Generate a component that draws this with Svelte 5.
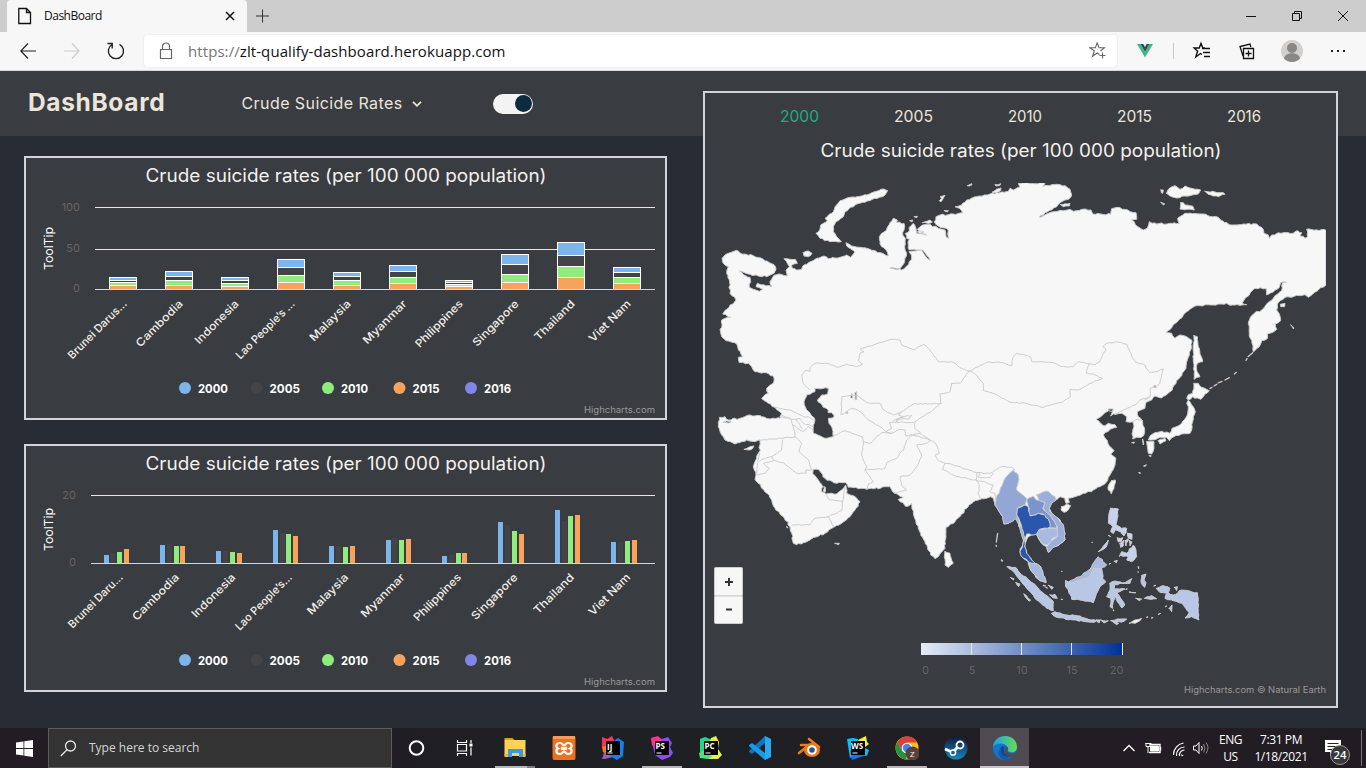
<script>
  const series = [
    { name: '2000', color: '#7cb5ec', len: 30 },
    { name: '2005', color: '#434348', len: 30.5 },
    { name: '2010', color: '#90ed7d', len: 27 },
    { name: '2015', color: '#f7a35c', len: 27 },
    { name: '2016', color: '#8085e9', len: 27 }
  ];

  // Stacked column edges, top to bottom
  const stacked = [
    { label: 'Brunei Darus…', len: 78, edges: [277.5, 280.5, 282.5, 285.5] },
    { label: 'Cambodia', len: 61, edges: [271.5, 276.5, 280.5, 285.5] },
    { label: 'Indonesia', len: 57, edges: [277.5, 280.5, 283.5, 286.5] },
    { label: 'Lao People’s …', len: 78, edges: [259.5, 267.5, 275.5, 282.5] },
    { label: 'Malaysia', len: 53, edges: [272.5, 276.5, 280.5, 285.5] },
    { label: 'Myanmar', len: 57, edges: [265.5, 271.5, 277.5, 283.5] },
    { label: 'Philippines', len: 62, edges: [280.5, 282.5, 284.5, 286.5] },
    { label: 'Singapore', len: 60, edges: [254.5, 264.5, 274.5, 282.5] },
    { label: 'Thailand', len: 52, edges: [242.5, 255.5, 266.5, 277.5] },
    { label: 'Viet Nam', len: 54, edges: [267.5, 272.5, 277.5, 283.5] }
  ];

  const grouped = [
    { label: 'Brunei Daru…', len: 72, x: [104, 110, 117, 124], top: [555, 553, 552, 549] },
    { label: 'Cambodia', len: 61, x: [160, 167, 174, 180], top: [545, 544, 546, 546] },
    { label: 'Indonesia', len: 57, x: [216, 223, 230, 237], top: [551, 551, 552, 553] },
    { label: 'Lao People’s…', len: 75, x: [273, 280, 286, 293], top: [530, 533, 534, 536] },
    { label: 'Malaysia', len: 53, x: [329, 336, 343, 350], top: [546, 546, 547, 546] },
    { label: 'Myanmar', len: 57, x: [386, 392, 399, 406], top: [540, 538, 540, 539] },
    { label: 'Philippines', len: 62, x: [442, 449, 456, 462], top: [556, 555, 553, 553] },
    { label: 'Singapore', len: 60, x: [498, 505, 512, 519], top: [522, 525, 531, 534] },
    { label: 'Thailand', len: 52, x: [555, 562, 568, 575], top: [510, 521, 516, 515] },
    { label: 'Viet Nam', len: 54, x: [611, 618, 625, 632], top: [542, 542, 541, 540] }
  ];

  const years = [['2000', 39], ['2005', 39], ['2010', 34], ['2015', 35], ['2016', 34]];

  // Map geometry: "x,y" lists given in four survey sheets, each with its own origin
  const origin = { A: [0, 0], B: [930, 0], C: [0, 660], D: [900, 660] };
  function pts(spec) {
    const out = [];
    for (const part of spec.split('|')) {
      const [ox, oy] = origin[part.trim()[0]];
      for (const p of part.trim().slice(1).trim().split(/\s+/)) {
        const [x, y] = p.split(',').map(Number);
        out.push([x + ox, y + oy]);
      }
    }
    return out;
  }
  let seed = 11;
  function rnd() {
    seed = (seed * 16807) % 2147483647;
    return seed / 2147483647 - 0.5;
  }
  // Breaks long straight edges into a slightly irregular coastline
  function path(spec, closed = true, rough = 4) {
    const p = pts(spec);
    const n = closed ? p.length : p.length - 1;
    let d = `M${p[0]}`;
    for (let i = 0; i < n; i++) {
      const a = p[i], b = p[(i + 1) % p.length];
      const len = Math.hypot(b[0] - a[0], b[1] - a[1]);
      const k = rough && len < 120 ? Math.floor(len / 7) : 0;
      for (let j = 1; j < k; j++) {
        const t = j / k;
        d += `L${(a[0] + (b[0] - a[0]) * t + rnd() * rough).toFixed(1)},${(a[1] + (b[1] - a[1]) * t + rnd() * rough).toFixed(1)}`;
      }
      d += `L${b}`;
    }
    return closed ? d + 'Z' : d;
  }

  const mainland = path(
    'A 67,265 85,250 110,241 122,250 160,257 190,268 222,284 228,298 222,310 200,320 175,318 150,313 118,303 130,314 150,322 152,335 148,352 160,358 178,364 188,358 168,350 172,340 190,344 215,350 210,335 222,316 238,312 262,318 258,300 268,290 262,280 252,266 270,268 286,268 292,280 275,285 276,294 290,300 305,298 308,288 345,268 372,258 385,266 420,262 440,255 452,262 465,246 440,228 438,218 455,228 480,232 510,238 540,248 565,258 558,240 540,222 538,200 545,190 560,180 570,158 580,145 592,150 590,158 612,160 612,180 608,195 616,205 614,230 620,250 612,280 600,296 570,294 605,300 620,288 634,270 634,255 627,245 640,243 665,240 676,258 690,271 680,256 668,240 640,238 628,240 625,225 628,208 620,205 616,190 628,182 632,168 640,160 648,175 650,190 680,195 665,188 652,178 668,165 690,163 715,175 735,180 738,200 746,206 745,180 715,168 703,155 708,140 720,135 760,132 788,128 778,115 765,110 785,105 800,90 830,80 870,72 905,66 925,64' +
    '|B 0,55 10,60 30,52 25,40 105,40 98,50 125,44 165,47 180,58 185,75 175,88 150,98 125,120 105,128 88,142 110,132 135,125 160,122 180,118 190,124 215,118 243,120 248,132 302,133 305,116 330,113 360,125 378,128 380,148 365,150 380,168 400,180 412,175 418,155 440,162 480,160 508,160 503,145 525,130 570,132 625,142 632,150 665,165 700,162 740,162 760,178 762,190 775,195 778,205 785,195 820,188 850,190 862,182 875,188 870,198 885,205 893,200 890,178 948,181 948,345 925,360 895,382 885,374 860,376 845,382 825,382 810,392 802,402 800,420 808,432 812,452 796,462 800,478 785,488 772,492 772,506 755,512 748,530 730,546 726,520 718,490 715,460 722,440 735,428 755,420 770,402 790,385 815,362 818,338 830,337 812,338 808,352 790,366 770,375 768,355 735,355 720,370 705,385 697,398 710,404 690,406 660,406 650,400 610,405 555,408 530,425 505,452 468,488 485,490 495,505 510,495 530,500 545,510 542,540 532,570 528,595 505,628 480,665 455,684 435,678 425,690 408,697 405,715' +
    '|D 412,65 415,80 428,95 434,120 430,138 410,142 398,147 398,125 402,110 398,95 378,95 380,80 365,70 340,72 332,78 340,60 330,57 315,68 300,82 288,88 300,98 312,108 325,100 345,104 350,112 330,118 310,135 322,152 330,170 342,182 332,192 348,205 345,225 330,255 318,278 300,290 275,305 250,310 225,320 205,325 208,338 198,340 195,325 180,320 168,330 155,340 148,355 155,370 175,385 190,405 195,430 195,450 180,462 160,472 145,487 140,470 125,460 115,445 108,432 95,435 85,440 78,455 75,475 80,490 95,510 105,520 122,530 128,545 132,565 138,578 120,572 105,555 92,540 85,515 65,500 60,485 68,465 70,450 62,425 55,400 50,385 40,388 25,400 12,402 8,380 -5,360 -15,342' +
    '|C 880,325 872,320 860,325 835,330 820,335 800,355 765,395 738,412 738,440 735,475 715,500 705,506 692,495 675,455 655,415 640,370 635,340 618,350 595,328 610,322 585,310 570,290 500,298 445,292 438,278 425,278 400,278 375,265 358,240 340,238 338,250 355,270 368,290 365,305 378,312 410,312 425,300 437,285 440,310 462,318 480,335 465,360 450,380 425,400 395,415 375,430 330,450 290,464 280,460 275,430 270,410 250,380 225,355 215,330 190,298 165,268 168,255 160,230 170,205 178,185 180,150 165,155 140,150 105,162 75,150 65,135 55,110 58,82 75,80 85,90 120,85 150,75 185,80 210,87 240,85 245,70 225,52 205,40 185,25' +
    '|A 205,670 200,655 220,640 220,618 190,608 165,605 145,580 118,578 115,562 128,560 115,540 105,518 78,512 65,500 62,488 65,450 75,445 92,442 68,432 108,390 90,370 88,330 80,310 85,290 70,280',
    true, 5
  );

  const lakes = [
    path('A 345,655 385,655 383,672 365,675 352,690 370,712 385,720 384,728 395,728 403,738 398,744 385,745 387,760 395,770 400,800 375,805 340,790 340,765 345,750 320,720 312,695 320,675 345,665'),
    path('A 465,668 470,665 470,688 466,690', true, 0),
    path('A 455,672 458,672 457,684 451,684', true, 0),
    path('C 70,97 80,93 92,95 88,99', true, 0),
    path('B 432,647 438,647 438,653 433,653', true, 0),
    path('B 296,717 310,717 306,724 296,723', true, 0),
    path('C 440,66 444,66 442,71 439,70', true, 0)
  ];

  const islands = [
    'A 562,62 550,57 500,75 450,82 420,92 410,105 395,130 375,145 382,152 362,165 360,178 348,190 360,205 390,215 424,215 410,200 400,185 400,170 408,155 430,140 435,125 465,105 510,92 555,75',
    'A 310,248 325,243 336,250 325,260 312,258',
    'B 470,70 478,55 495,47 510,58 525,48 545,55 572,60 565,72 525,78 500,84 480,78',
    'B 585,64 640,68 645,73 625,80 595,73',
    'B 512,98 520,98 525,105 548,108 553,120 510,117',
    'B 453,60 460,60 458,70 454,68',
    'B 453,97 464,102 460,105',
    'B 152,104 180,100 178,108 160,110',
    'A 722,80 735,76 730,84 722,96 718,92 724,86',
    'A 803,47 815,41 816,44 808,48',
    'A 886,44 902,41 900,46 888,48',
    'A 890,58 903,54 902,62 885,68 876,67',
    'A 733,122 745,122 742,126',
    'A 630,152 638,150 636,156',
    'A 643,140 652,139 650,143',
    'A 668,158 690,150 697,156 682,160',
    'A 657,182 672,186 660,190 652,186',
    'B 552,497 562,500 565,530 578,575 562,580 560,600 570,620 552,628 552,590 550,545',
    'B 552,640 565,640 575,652 598,662 585,672 572,688 548,680 536,690 530,685 535,674 548,670',
    'B 812,403 825,400 824,410 812,410',
    'B 842,465 852,474 850,477',
    'D 565,30 575,45 586,65 578,95 575,120 570,130 545,132 522,140 508,152 500,142 480,142 455,150 445,150 450,138 465,128 485,124 510,130 516,115 538,106 548,94 562,75 565,50 560,40',
    'D 475,152 495,145 498,152 480,162',
    'D 440,155 462,155 462,175 455,192 445,190 442,170',
    'D 335,272 346,270 342,295 334,312 325,300 326,285',
    'D 185,350 200,342 212,347 205,360 192,367 183,360',
    'C 735,485 750,490 760,520 745,532 735,525 733,500',
    'C 133,178 150,170 162,168 150,180',
    'C 405,460 418,460 416,464',
    'C 372,290 376,292 376,306 370,304',
    'D 396,158 403,156 402,160',
    'D 417,248 421,248 420,251',
    'D 432,228 439,224 436,229',
    'D 448,196 454,198 450,200',
    'D 428,148 431,160 430,165'
  ].map((s) => path(s, true, 4));

  const kurils = ['B 600,655 606,652', 'B 612,648 620,643', 'B 624,639 636,634', 'B 645,630 658,623', 'B 673,612 679,607', 'B 708,571 711,566', 'B 714,560 728,548',
    'C 893,430 889,456', 'C 888,466 889,469', 'C 904,510 907,513', 'C 260,410 263,413'].map((s) => path(s, false, 0));

  const shaded = [
    { c: '#93a7d6', d: ['D -15,345 -12,325 0,300 15,265 40,240 55,255 57,270 50,300 62,310 80,325 75,345 55,352 50,375 58,400 70,425 75,445 72,462 62,425 50,385 25,400 12,402 8,380 -5,360'] },
    { c: '#7b94cd', d: ['D 80,330 100,318 110,330 135,338 128,355 150,375 170,405 168,415 150,415 148,395 130,372 115,370 90,378 85,350'] },
    { c: '#9bafdc', d: ['D 110,315 140,303 165,320 168,330 155,340 148,355 155,370 175,385 190,405 195,430 195,450 180,462 160,472 145,487 140,470 150,455 172,440 172,410 150,375 130,355 135,338 118,332'] },
    { c: '#a9bae0', d: ['D 110,432 118,418 150,415 172,415 172,440 155,448 150,458 140,465 125,460', 'D 85,515 105,520 122,530 128,545 138,578 120,572 105,555 92,540'] },
    { c: '#2a56ac', d: ['D 52,355 75,345 85,350 90,378 115,370 135,375 148,395 150,412 118,418 110,432 95,435 80,432 76,445 74,470 80,490 95,510 105,520 90,518 65,500 60,485 68,465 75,445 70,425 60,395 50,375'] },
    { c: '#b9c7e6', d: [
      'D 22,530 45,532 70,558 100,580 125,605 160,635 160,662 140,655 110,630 85,600 60,570 45,550',
      'D 197,572 215,578 240,570 270,560 280,535 305,535 308,565 318,575 300,590 285,625 280,638 240,630 215,628 205,600 197,590',
      'D 155,670 165,665 200,675 240,678 265,688 290,692 275,697 220,690 170,682',
      'D 330,580 345,573 375,578 396,566 390,580 345,583 342,597 375,597 350,608 362,625 374,645 366,654 352,635 345,615 338,655 330,650 332,625 320,620 330,600',
      'D 470,595 490,587 510,595 505,608 520,615 545,600 592,608 597,690 575,680 555,684 568,668 545,640 520,632 495,625 500,610 480,607',
      'D 146,586 160,592 155,598', 'D 150,615 165,613 172,625 160,624', 'D 32,563 42,566 40,570', 'D 48,578 60,582 56,590', 'D 72,612 92,630 88,634',
      'D 290,690 300,690 298,698 292,696', 'D 302,690 325,692 312,699', 'D 333,692 352,687 380,687 372,694 340,696', 'D 342,698 356,700 350,704',
      'D 426,556 438,552 432,570 438,578 434,592 424,580', 'D 434,625 455,617 470,626 445,627', 'D 408,625 425,627 418,632', 'D 388,606 408,608', 'D 508,655 516,645 515,665', 'D 524,592 532,590 530,602', 'D 475,673 482,670'
    ] },
    { c: '#a9bae0', d: ['D 205,577 240,560 270,538 283,515 295,500 320,525 302,537 280,535 270,560 240,570 215,578'] },
    { c: '#c7d3ed', d: [
      'D 332,355 355,357 352,385 348,405 365,415 380,415 378,430 360,425 345,420 340,430 332,425 338,410 325,400 326,380',
      'D 380,490 400,465 408,480 410,500 395,515 380,510 385,500 362,496 358,500 365,485',
      'D 295,485 310,468 322,455 325,450 320,468 310,478', 'D 352,444 368,443 364,455 354,455', 'D 360,460 372,450 370,468 362,472', 'D 376,452 385,446 378,468',
      'D 383,430 396,432 396,448 385,444', 'D 388,452 396,456 390,468', 'D 335,418 344,423 340,430', 'D 365,430 375,432 372,438', 'D 343,514 352,511 349,518', 'D 328,522 333,520', 'D 325,436 332,440'
    ] },
    { c: '#f7f7f7', d: ['D 388,700 405,690 425,685 420,692 405,700'] }
  ].map((g) => ({ c: g.c, d: g.d.map((s) => path(s, true, 4)).join('') }));

  const dots = 'D 185,544 186,544|D 184,628 187,628|D 415,530 416,535|D 414,546 415,546|D 455,684 458,683|D 440,682 443,681|D 130,586 136,588|D 138,592 142,594|D 276,457 277,457|D 340,660 341,662|D 378,598 381,597|D 462,588 466,586|D 497,650 499,648|D 5,511 6,512'
    .split('|').map((s) => path(s, false, 0));

  const borders = [
    'A 330,660 310,640 305,615 318,600 330,605 330,595 345,580 380,580 415,592 440,582 470,590 487,583 475,572 480,550 492,545 480,537 520,525 570,508 600,510 605,525 640,540 672,522 690,540 715,575 755,575 785,595 808,603 860,577 910,578 935,588|B 10,560 20,550 60,560 65,575 130,578 155,590 190,590 205,575 255,585 270,575 280,550 288,540 278,530 290,520 320,515 350,522 360,545 375,575 405,585 418,607 440,605 460,597 450,640 440,650 420,655 420,680 405,690',
    'B 420,680 390,690 375,705 345,718|D 345,72',
    'D 398,95 412,88 428,92',
    'B 238,580 228,608 250,612 278,625 240,640 205,660 180,658 182,680 160,695 95,712 50,700 0,697|A 880,670 850,662 850,640 830,615 808,603 780,640 755,640 750,665 720,672 722,700|C 700,60 660,85 645,95 645,115 662,130 690,150 710,165 718,190 705,195 715,212 735,220 760,225 830,248 870,250 905,230 935,232 945,240',
    'C 735,220 728,238 770,260 828,270 830,248',
    'C 838,248 835,262 870,263 880,250',
    'C 828,270 838,285 835,310 842,328',
    'C 828,270 860,278 880,285 870,305 885,310 885,330',
    'C 725,40 640,42 605,65 580,75 550,60 540,40 500,38 470,15 425,20 423,75 440,65 455,55 480,65 505,90 540,110 558,125 575,115 568,98 590,97 600,82 635,76 628,86 590,88 590,97 640,97',
    'C 605,65 595,75 610,80 580,92',
    'C 558,125 575,130 600,118 615,120 618,138 660,130',
    'C 400,137 435,122 485,140 490,155 485,195 500,230 495,240 520,275 505,282 500,298',
    'C 490,155 510,160 545,128 575,130',
    'C 495,240 555,235 560,218 590,205 612,175 620,150 640,135 690,150 680,160 650,165 665,195 650,230 630,255 600,260 605,285 620,300 585,310',
    'C 178,150 245,145 285,140 280,110 270,85 240,80',
    'C 225,52 270,60 310,80 325,80 340,90',
    'C 245,75 275,88 300,85 310,100 340,110',
    'C 280,105 300,120 310,125 325,110 340,122',
    'C 288,88 298,100 305,115',
    'C 285,140 305,160 297,185 325,210 335,240 318,240 318,250 290,250 250,218 220,210 215,200 180,212',
    'C 215,200 245,180 248,150',
    'C 170,255 195,250 208,235 190,220 220,212',
    'C 180,190 175,210 170,250',
    'C 278,405 328,405 345,385 385,380 425,362 428,335 390,330 378,312',
    'C 385,380 400,410',
    'C 428,335 435,295'
  ].map((s) => path(s, false, 3));
</script>

{#snippet legend(y)}
  {#each series as s, i}
    <circle cx={185 + i * 71.5} cy={y} r="6" fill={s.color} />
    <text class="key" x={198 + i * 71.5} y={y + 4.5} textLength={s.len} lengthAdjust="spacingAndGlyphs">{s.name}</text>
  {/each}
{/snippet}

<div class="screen">
  <div class="tabs">
    <div class="tab">
      <svg width="14" height="18" viewBox="0 0 14 18"><path d="M.8 1.500h7.700l4 4v11H.8zM8.500 1.500v4h4" fill="none" stroke="#111" stroke-width="1.300" /></svg>
      <span class="tabname">DashBoard</span>
      <svg width="10" height="10" viewBox="0 0 10 10"><path d="M1 1l8 8M9 1l-8 8" stroke="#111" stroke-width="1.500" /></svg>
    </div>
    <svg class="plus" width="14" height="14" viewBox="0 0 14 14"><path d="M6.500 .5v13M0 7h13" stroke="#333" /></svg>
    <svg class="win" width="106" height="12" viewBox="0 0 106 12" fill="none" stroke="#111">
      <path d="M0 6.500h10M46.500 3.500h7v7h-7zM48.500 3.500v-2h7v7h-2M92 1l10 10M102 1l-10 10" />
    </svg>
  </div>

  <div class="toolbar">
    <svg class="navicons" width="110" height="20" viewBox="0 0 110 20" fill="none">
      <path d="M16 10H.8M8 2.500L.8 10l7.200 7.500" stroke="#222" stroke-width="1.200" />
      <path d="M44 10h15M52 2.500l7 7.500-7 7.500" stroke="#ccc" stroke-width="1.200" />
      <path d="M99.500 3.300a7.600 7.600 0 1 1-7.500 .2M92.200 7.500v-5h-4.700" stroke="#222" stroke-width="1.400" />
    </svg>
    <div class="address">
      <svg width="14" height="18" viewBox="0 0 14 18" fill="none" stroke="#666" stroke-width="1.200"><path d="M1.500 7.500h11v9h-11zM3.500 7.500v-3a3.500 3.500 0 0 1 7 0v3" /></svg>
      <span class="url"><i>https://</i>zlt-qualify-dashboard.herokuapp.com</span>
      <svg width="18" height="18" viewBox="0 0 18 18" fill="none" stroke="#666" stroke-width="1.100"><path d="M10.500 12.500l-2.300-1.500-4.700 3.300 1.800-5.500L.8 5.800h5.600L8.200 .8 10 5.800h5.400L11.500 9M10.500 13.500h6M13.500 10.500v6" /></svg>
    </div>
    <svg class="exts" width="212" height="26" viewBox="1137 38 212 26" fill="none">
      <path d="M1137 44h3.500l4.500 8 4.500-8h3.500l-8 13.500z" fill="#41b883" />
      <path d="M1140.500 44h2.800l1.700 3 1.700-3h2.800l-4.500 8z" fill="#35495e" />
      <path d="M1173.500 43v16" stroke="#c8c8c8" />
      <path d="M1202 54.500l-1.500-1-4.700 3.500 1.800-5.700-3.400-3.300h5l1.800-4.500 1.800 4.500h2.200M1203 52.500h7M1204 56.500h6M1202 48.500h8" stroke="#111" stroke-width="1.400" />
      <path d="M1243.500 48.500h10v10h-10zM1248.500 50.500v6M1245.500 53.500h6M1243 56l-3-9.500 10-2.500 .8 3" stroke="#111" stroke-width="1.300" />
      <circle cx="1292" cy="51" r="11" fill="#d2d0ce" /><circle cx="1292" cy="48" r="5" fill="#8a8886" />
      <path d="M1284 58.500c1-7 15-7 16 0a11 11 0 0 1-16 0z" fill="#8a8886" />
      <path d="M1331 51h2M1337 51h2M1343 51h2" stroke="#222" stroke-width="2" />
    </svg>
  </div>

  <main>
    <section class="left">
      <nav>
        <span class="brand">DashBoard</span>
        <span class="menu">Crude Suicide Rates</span>
        <svg width="10" height="8" viewBox="0 0 10 8"><path d="M1 1.800l4 4 4-4" fill="none" stroke="#ebe5da" stroke-width="1.800" /></svg>
        <span class="toggle"><b></b></span>
      </nav>

      <div class="card one">
        <svg width="639" height="260" viewBox="26 158 639 260">
          <text class="title" x="145.500" y="182" textLength="401" lengthAdjust="spacingAndGlyphs">Crude suicide rates (per 100 000 population)</text>
          <path d="M95 207.500h560M95 249.500h560" stroke="#e6e6e6" />
          <g class="axis"><text x="80" y="211">100</text><text x="80" y="252">50</text><text x="80" y="292">0</text></g>
          <text class="tip" transform="translate(52.500 270) rotate(-90)" textLength="43" lengthAdjust="spacingAndGlyphs">ToolTip</text>
          {#each stacked as c, i}
            {#each c.edges as top, j}
              <rect x={109.5 + i * 56} y={top} width="27" height={(c.edges[j + 1] ?? 289.5) - top} fill={series[j].color} stroke="#fff" />
            {/each}
            <text class="cat" transform="translate({127.500 + i * 56} 304.500) rotate(-45)" textLength={c.len} lengthAdjust="spacingAndGlyphs">{c.label}</text>
          {/each}
          <path d="M95 289.500h560" stroke="#ccd6eb" />
          {@render legend(388)}
          <text class="credit" x="655" y="413" textLength="71" lengthAdjust="spacingAndGlyphs">Highcharts.com</text>
        </svg>
      </div>

      <div class="card two">
        <svg width="639" height="244" viewBox="26 446 639 244">
          <text class="title" x="145.500" y="470" textLength="401" lengthAdjust="spacingAndGlyphs">Crude suicide rates (per 100 000 population)</text>
          <path d="M91 495.500h564" stroke="#e6e6e6" />
          <g class="axis"><text x="76" y="499">20</text><text x="76" y="566">0</text></g>
          <text class="tip" transform="translate(52.500 551) rotate(-90)" textLength="43" lengthAdjust="spacingAndGlyphs">ToolTip</text>
          {#each grouped as c, i}
            {#each c.x as x, j}
              <rect {x} y={c.top[j]} width="5" height={563 - c.top[j]} fill={series[j].color} />
            {/each}
            <text class="cat" transform="translate({123.500 + i * 56.4} 578) rotate(-45)" textLength={c.len} lengthAdjust="spacingAndGlyphs">{c.label}</text>
          {/each}
          <path d="M91 563.500h564" stroke="#ccd6eb" />
          {@render legend(660)}
          <text class="credit" x="655" y="685" textLength="71" lengthAdjust="spacingAndGlyphs">Highcharts.com</text>
        </svg>
      </div>
    </section>

    <section class="card mapcard">
      <div class="years">
        {#each years as [y, w], i}
          <svg width={w} height="24"><text class:on={i === 0} x="0" y="19" textLength={w} lengthAdjust="spacingAndGlyphs">{y}</text></svg>
        {/each}
      </div>
      <svg width="631" height="570" viewBox="705 136 631 570">
        <defs>
          <linearGradient id="scale"><stop offset="0" stop-color="#e6ebf5" /><stop offset="1" stop-color="#003399" /></linearGradient>
        </defs>
        <text class="title" x="820.500" y="157" textLength="401" lengthAdjust="spacingAndGlyphs">Crude suicide rates (per 100 000 population)</text>
        <svg x="705" y="183" width="621" height="450" viewBox="705 183 621 450">
          <g transform="translate(700 170) scale(.33333)" stroke="#ccc" stroke-width="3" stroke-linejoin="round" stroke-linecap="round">
            <path d={mainland} fill="#f7f7f7" />
            {#each lakes as d}<path {d} fill="#393c40" />{/each}
            {#each borders as d}<path {d} fill="none" />{/each}
            {#each islands as d}<path {d} fill="#f7f7f7" />{/each}
            {#each kurils as d}<path {d} fill="none" stroke-width="4" />{/each}
            {#each shaded as s}<path d={s.d} fill={s.c} />{/each}
            {#each dots as d}<path {d} fill="none" stroke-width="4" />{/each}
          </g>
        </svg>
        <g class="zoomer">
          <rect x="714.500" y="567.500" width="28" height="28.500" rx="1" /><rect x="714.500" y="596" width="28" height="27.500" rx="1" />
          <path d="M725 582h8M729 578v8M726 609.500h6" stroke="#333" stroke-width="2" />
        </g>
        <rect x="921" y="643" width="201" height="12" fill="url(#scale)" />
        <path d="M971.500 643v12M1021.500 643v12M1071.500 643v12M1122.500 643v12" stroke="#e6e6e6" />
        <g class="axis mid"><text x="925.500" y="674">0</text><text x="972" y="674">5</text><text x="1022" y="674">10</text><text x="1072" y="674">15</text><text x="1116.500" y="674">20</text></g>
        <text class="credit" x="1326" y="693" textLength="142" lengthAdjust="spacingAndGlyphs">Highcharts.com © Natural Earth</text>
      </svg>
    </section>
  </main>

  <footer>
    <div class="start"><svg width="17" height="17" viewBox="0 0 17 17" fill="#fff"><path d="M0 2.400l7.500-1v6.700H0zM8.300 1.200L17 0v8.100H8.300zM0 8.900h7.500v6.700l-7.500-1zM8.300 8.900H17V17l-8.700-1.200z" /></svg></div>
    <div class="search">
      <svg width="17" height="17" viewBox="0 0 17 17" fill="none" stroke="#e4e4e4" stroke-width="1.300"><circle cx="10.500" cy="6" r="5" /><path d="M7 9.700L.8 16" /></svg>
      <span>Type here to search</span>
    </div>
    <div class="apps">
      <div><svg viewBox="0 0 24 24"><circle cx="11.500" cy="12" r="6.800" fill="none" stroke="#fff" stroke-width="2" /></svg></div>
      <div><svg viewBox="0 0 24 24" fill="none" stroke="#fff" stroke-width="1.200"><path d="M3.500 4v2.500h9V4M3.500 8.500h9v6.500h-9zM3.500 20v-2.500h9V20M17 4v3M17 11.500v8" /><path d="M15.500 9h3" stroke-width="3" /></svg></div>
      <div class="open group"><svg viewBox="0 0 24 24"><path d="M1.500 2h8l2 2h-10z" fill="#e3a100" /><path d="M1.500 4h21v16h-21z" fill="#ffd158" /><path d="M5 21v-8h15v8h-4v-4H9v4z" fill="#3f98e0" /><path d="M1.500 18h3.500v3H1.500zM20 18h2.500v3H20z" fill="#f2ba34" /></svg></div>
      <div><svg viewBox="0 0 24 24"><rect x=".5" y="0" width="23" height="24" rx="2" fill="#ee6f1d" /><path d="M1 0h22v3H1z" fill="#f79a5b" /><path d="M8 7c-4.500 0-4.500 4-2 5.500-2.500 1.500-2.500 5.500 2 5.500 3 0 2.500-2.500 4-2.500s1 2.500 4 2.500c4.500 0 4.500-4 2-5.500 2.500-1.500 2.500-5.500-2-5.500-3 0-2.500 2.500-4 2.500S11 7 8 7zM9 11.500l6 2M15 11.500l-6 2" fill="none" stroke="#fff" stroke-width="2.200" /></svg></div>
      <div><svg viewBox="0 0 24 24"><path d="M1 1l5 2 5-3 3 6-5 8-8-3z" fill="#fe315d" /><path d="M1 11l8-2 6 9-8 2-5-4z" fill="#f97a12" /><path d="M3 17l8-3 1 7-8 2-3 0z" fill="#a45ab8" /><path d="M13 5l4-3 6 4-1 14-6 4-7-4 8-6z" fill="#1b7ef0" /><rect x="5" y="5" width="14" height="14" fill="#000" /><text x="6" y="13.500">IJ</text><path d="M6.500 17h5" stroke="#fff" /></svg></div>
      <div class="open"><svg viewBox="0 0 24 24"><path d="M1 2l7-1 4 2 6-2 4 6-2 4 3 6-3 4-8 3-7-5z" fill="#8b4bf5" /><path d="M1 2l7-2 5 5-6 9-5-5z" fill="#ff318c" /><path d="M4 13l4-3 4 10-6-2z" fill="#c93fe8" /><rect x="5" y="5" width="14" height="14" fill="#000" /><text x="5.500" y="13">PS</text><path d="M6.500 17h5" stroke="#fff" /></svg></div>
      <div><svg viewBox="0 0 24 24"><path d="M1 3l5-2 5 2 4 4-7 12-7-3z" fill="#21d789" /><path d="M12 2l5-2 3 6-1 7 4 6-4 4-9 0-4-5z" fill="#e6f04a" /><path d="M0 17l7-4 6 8-4 2-8-1z" fill="#5cdc78" /><rect x="5" y="5" width="14" height="14" fill="#000" /><text x="5.500" y="13">PC</text><path d="M6.500 17h5" stroke="#fff" /></svg></div>
      <div><svg viewBox="0 0 24 24"><path d="M17 0l6 3v18l-6 3z" fill="#2aa9f3" /><path d="M17 0v7L4 18l-3-2V15z" fill="#0879be" /><path d="M1 9l3-2 13 10v7L1 10z" fill="#159bea" /></svg></div>
      <div><svg viewBox="0 0 24 24"><path d="M12 3l10 8M4 9h12M2 17l10-8" stroke="#ed7b17" stroke-width="2.600" stroke-linecap="round" /><ellipse cx="15" cy="14" rx="8" ry="7" fill="#ed7b17" /><circle cx="15" cy="14" r="4.800" fill="#fff" /><circle cx="15" cy="14" r="2.800" fill="#265787" /></svg></div>
      <div><svg viewBox="0 0 24 24"><path d="M1 3l6-1 5 1-2 16-6 3z" fill="#07c3f2" /><path d="M4 15l8-4 9 8-7 2-8 3z" fill="#087cfa" /><path d="M12 4l8-4 1 6 2 2-4 3-5-1z" fill="#f2ee4a" /><path d="M17 11l6 3-2 6-5-1z" fill="#12b8ef" /><rect x="5" y="5" width="14" height="14" fill="#000" /><text x="5" y="13">WS</text><path d="M6.500 17h5" stroke="#fff" /></svg></div>
      <div class="open"><svg viewBox="0 0 24 24"><circle cx="12" cy="12" r="11.500" fill="#fbc116" /><path d="M2.500 6a11.500 11.500 0 0 1 20 .5H12L7 15z" fill="#d9413a" /><path d="M2.500 6L7 15l5 3-1 5.500A11.500 11.500 0 0 1 2.500 6z" fill="#229342" /><circle cx="12" cy="12" r="5.300" fill="#fff" /><circle cx="12" cy="12" r="4.200" fill="#4285f4" /><circle cx="17.500" cy="17.500" r="7" fill="#5d4037" /><text x="15" y="21" class="z">Z</text></svg></div>
      <div><svg viewBox="0 0 24 24"><defs><linearGradient id="steam" x2="0" y2="1"><stop stop-color="#111b3c" /><stop offset="1" stop-color="#1687bd" /></linearGradient></defs><circle cx="12" cy="12" r="11.500" fill="url(#steam)" /><circle cx="16" cy="9" r="3.500" fill="none" stroke="#fff" stroke-width="1.800" /><path d="M1 13l8 3.500M9 16l5-5" stroke="#fff" stroke-width="3" /><circle cx="9" cy="16.500" r="2.600" fill="#1b5789" stroke="#fff" stroke-width="1.500" /></svg></div>
      <div class="open active"><svg viewBox="0 0 24 24"><defs><linearGradient id="edge"><stop stop-color="#249de4" /><stop offset="1" stop-color="#63df55" /></linearGradient></defs><circle cx="12" cy="12" r="12" fill="#1476c8" /><path d="M0 11C1-3 23-4 24 11c0 6-7 6-9 4 2-6-8-11-15-4z" fill="url(#edge)" /><path d="M9 10c-6 6 2 14 12 10-9 1-12-5-9-9z" fill="#0c488f" /><path d="M13 11c3 0 2 3 1 4 1 3 8 3 9 1l1 1-3 4c-8 1-12-4-8-10z" fill="#504b52" /><path d="M9 12c-3 6 4 12 12 8.500-2 2.500-5 3.500-9 3.500C5 22 3 15 9 12z" fill="#135ba8" /></svg></div>
    </div>
    <svg class="tray" width="92" height="20" viewBox="1121 738 92 20" fill="none" stroke="#fff">
      <path d="M1123.500 751l5.500-5.500 5.500 5.500" stroke-width="1.300" />
      <path d="M1149.500 744.500h10.500v8h-11M1160.500 747v3.500" stroke-width="1.400" /><path d="M1150.500 746h8v5h-8z" fill="#fff" /><path d="M1145.500 743.500h6M1146 743v3.500h4V743M1148 747v6" />
      <path d="M1183 756a2 2 0 0 0-2-1M1179.500 756a5 5 0 0 1 5-6M1176.500 756a8 8 0 0 1 8-9M1173.500 755a12 12 0 0 1 10-12" stroke-width="1.200" />
      <path d="M1193.500 746h2.500l3-3.500v11l-3-3.500h-2.500zM1201.500 746q1.500 2 0 4.500" /><path d="M1203.500 744q3 4 0 8.500M1206 742.500q4 5 0 11" stroke="#888" />
    </svg>
    <div class="two-line lang">ENG<br />US</div>
    <div class="two-line clock">7:31 PM<br />1/18/2021</div>
    <svg class="note" width="44" height="36" viewBox="1322 730 44 36">
      <path d="M1325 740h16v12h-8l-3 3v-3h-5z" fill="#fff" /><path d="M1327.500 743.500h11M1327.500 746.500h11M1327.500 749.500h6" stroke="#222" />
      <circle cx="1340" cy="755" r="9.500" fill="#393739" stroke="#999" /><text x="1333.500" y="759" textLength="13" lengthAdjust="spacingAndGlyphs">24</text>
      <path d="M1361.500 728v40" stroke="#777" />
    </svg>
  </footer>
</div>

<style>
  :global(body) { margin: 0; overflow: hidden; }
  .screen { width: 1366px; height: 768px; display: flex; flex-direction: column; font-family: Inter, 'Open Sans', sans-serif; }
  svg { display: block; flex: none; }
  .tabs { height: 32px; background: #cdcdcd; display: flex; align-items: center; flex: none; font-family: 'Open Sans', 'Noto Sans', sans-serif; }
  .tab { width: 240px; height: 32px; margin-left: 7px; padding: 0 12px 0 11px; box-sizing: border-box; background: #f7f7f7; border-radius: 4px 4px 0 0; display: flex; align-items: center; gap: 12px; }
  .tab svg:last-child { margin-left: auto; }
  .tabname { font-size: 12px; letter-spacing: -0.5px; color: #111; margin-top: -1px; }
  .plus { margin-left: 9px; }
  .win { margin-left: auto; margin-right: 14px; }
  .toolbar { height: 38px; background: #f7f7f7; border-bottom: 1px solid #d4d8d6; display: flex; align-items: center; flex: none; }
  .navicons { margin-left: 20px; }
  .address { width: 973px; height: 32px; margin-left: 14px; padding: 0 10px 0 15px; box-sizing: border-box; border-radius: 4px; background: #fff; display: flex; align-items: center; box-shadow: 0 0 2px #ddd; }
  .url { font: 15px 'Open Sans', 'Noto Sans', sans-serif; margin-left: 15px; margin-right: auto; color: #111; letter-spacing: 0.08px; }
  .url i { font-style: normal; color: #757575; }
  .exts { margin-left: 20px; }
  main { height: 657px; flex: none; display: grid; grid-template-columns: 643px 635px; column-gap: 36px; padding-left: 24px; background: linear-gradient(#393c40 65px, #282c34 65px); }
  nav { height: 65px; display: flex; align-items: center; color: #ebe5da; }
  .brand { width: 213.500px; padding-left: 4px; margin-top: -3px; font-size: 24.500px; font-weight: 700; letter-spacing: 0.65px; }
  .menu { width: 170px; margin-top: -1px; font-size: 16px; letter-spacing: 0.42px; white-space: nowrap; }
  .toggle { width: 40px; height: 20px; margin-left: 71.500px; border-radius: 10px; background: #f3f3f3; display: flex; align-items: center; justify-content: flex-end; }
  .toggle b { width: 17px; height: 17px; margin-right: 1.500px; border-radius: 50%; background: #0c2b3e; }
  .card { box-sizing: border-box; border: 2px solid #d1d4da; background: #393c40; overflow: hidden; }
  .one { margin-top: 20px; height: 264px; }
  .two { margin-top: 24px; height: 248px; }
  .mapcard { margin-top: 20px; height: 617px; }
  .years { display: flex; gap: 75px; height: 33px; padding: 10px 0 0 75px; align-items: flex-start; }
  .years svg { overflow: visible; }
  .years text { font-size: 16px; fill: #ebe5da; }
  .years .on { fill: #1fad81; }
  .title { font-size: 18px; fill: #f3f1ee; }
  .axis text { font-size: 11px; fill: #666; text-anchor: end; }
  .axis.mid text { text-anchor: middle; }
  .tip { font-size: 12px; fill: #fff; }
  .cat { font-size: 11px; font-weight: 500; fill: #f1eee8; text-anchor: end; }
  .key { font-size: 12px; font-weight: 700; fill: #fff; }
  .credit { font-size: 9px; fill: #999; text-anchor: end; }
  .zoomer rect { fill: #f7f7f7; stroke: #ccc; }
  footer { height: 40px; flex: none; display: flex; align-items: center; background: linear-gradient(90deg, #231c24, #1e2024 50%, #231c24 85%, #211b22); font-family: 'Open Sans', 'Noto Sans', sans-serif; color: #fff; }
  .start { width: 48px; padding-left: 15.500px; box-sizing: border-box; }
  .search { width: 344px; height: 40px; box-sizing: border-box; border: 1px solid #5c5c5e; background: #333; display: flex; align-items: center; gap: 12px; padding-left: 11px; font-size: 12px; color: #d6d6d6; }
  .search span { margin-top: -2px; }
  .apps { display: flex; }
  .apps div { width: 49px; height: 40px; box-sizing: border-box; display: grid; place-items: center; border-bottom: 2px solid transparent; border-top: 2px solid transparent; }
  .apps svg { width: 24px; height: 24px; }
  .apps text { font: 700 8px 'Open Sans', sans-serif; fill: #fff; }
  .apps .z { font: 8px 'Open Sans', sans-serif; }
  .apps .open { background: linear-gradient(#b7b5b8, #b7b5b8) 50% 100% / 40px 2px no-repeat border-box; }
  .apps .group { background: linear-gradient(90deg, #b7b5b8 32px, #807e81 32px) 50% 100% / 40px 2px no-repeat border-box; }
  .apps .active { background: linear-gradient(#c5c3c7, #c5c3c7) 0 100% / 49px 2px no-repeat border-box, #504b52; }
  .tray { margin-left: auto; }
  .two-line { text-align: center; font-size: 12px; line-height: 17px; margin-top: -1px; letter-spacing: -0.4px; white-space: nowrap; }
  .lang { width: 35px; }
  .clock { width: 66px; }
  .note { margin-left: 8px; }
  .note text { font-size: 11px; font-weight: 600; fill: #fff; }
</style>
